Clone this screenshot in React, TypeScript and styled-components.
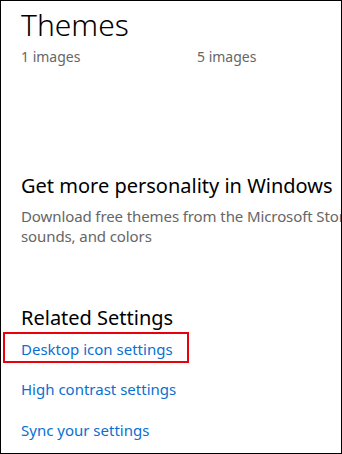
import React from 'react'
import styled, { createGlobalStyle } from 'styled-components'

const GlobalStyle = createGlobalStyle`
	html, body {
		margin: 0;
		padding: 0;
		background: #fff;
	}
	body {
		font-family: 'Noto Sans', 'Open Sans', sans-serif;
	}
`

const Frame = styled.div`
	box-sizing: border-box;
	width: 342px;
	height: 454px;
	border: 1px solid #000;
	overflow: hidden;
	background: #fff;
	padding-left: 20px;
`

const Content = styled.div`
	width: 520px;
`

const PageTitle = styled.h1`
	margin: 4px 0 0;
	font-size: 30px;
	font-weight: 300;
	line-height: 40px;
	color: #000;
`

const ThemeRow = styled.div`
	display: grid;
	grid-template-columns: 176px 176px;
`

const ThemeCount = styled.span`
	font-size: 14px;
	line-height: 24px;
	color: #666;
`

const Section = styled.section<{ $top: number }>`
	margin-top: ${p => p.$top}px;
`

const SectionTitle = styled.h2`
	margin: 0;
	font-size: 20px;
	font-weight: 400;
	line-height: 28px;
	color: #000;
`

const Description = styled.p`
	margin: 6px 0 0;
	font-size: 15px;
	line-height: 20px;
	letter-spacing: -0.1px;
	color: #666;
	white-space: nowrap;
`

const LinkList = styled.ul`
	list-style: none;
	margin: 0;
	padding: 0;
`

const LinkItem = styled.li<{ $highlighted?: boolean }>`
	margin-top: ${p => (p.$highlighted ? 2 : 15)}px;
	& > a {
		display: inline-block;
		font-size: 15px;
		line-height: 26px;
		color: #0a6fd1;
		text-decoration: none;
		${p =>
			p.$highlighted &&
			`
			line-height: 23px;
			margin-left: -16px;
			padding: 4px 14px 0 16px;
			outline: 2px solid #e8000a;
		`}
	}
`

const links = [
	{ label: 'Desktop icon settings', highlighted: true },
	{ label: 'High contrast settings' },
	{ label: 'Sync your settings' }
]

export default function App() {
	return (
		<>
			<GlobalStyle />
			<Frame>
				<Content>
					<PageTitle>Themes</PageTitle>
					<ThemeRow>
						<ThemeCount>1 images</ThemeCount>
						<ThemeCount>5 images</ThemeCount>
					</ThemeRow>
					<Section $top={103}>
						<SectionTitle>Get more personality in Windows</SectionTitle>
						<Description>
							Download free themes from the Microsoft Store that combine wallpapers,
							<br />
							sounds, and colors
						</Description>
					</Section>
					<Section $top={58}>
						<SectionTitle>Related Settings</SectionTitle>
						<LinkList>
							{links.map(link => (
								<LinkItem key={link.label} $highlighted={link.highlighted}>
									<a href="#">{link.label}</a>
								</LinkItem>
							))}
						</LinkList>
					</Section>
				</Content>
			</Frame>
		</>
	)
}
